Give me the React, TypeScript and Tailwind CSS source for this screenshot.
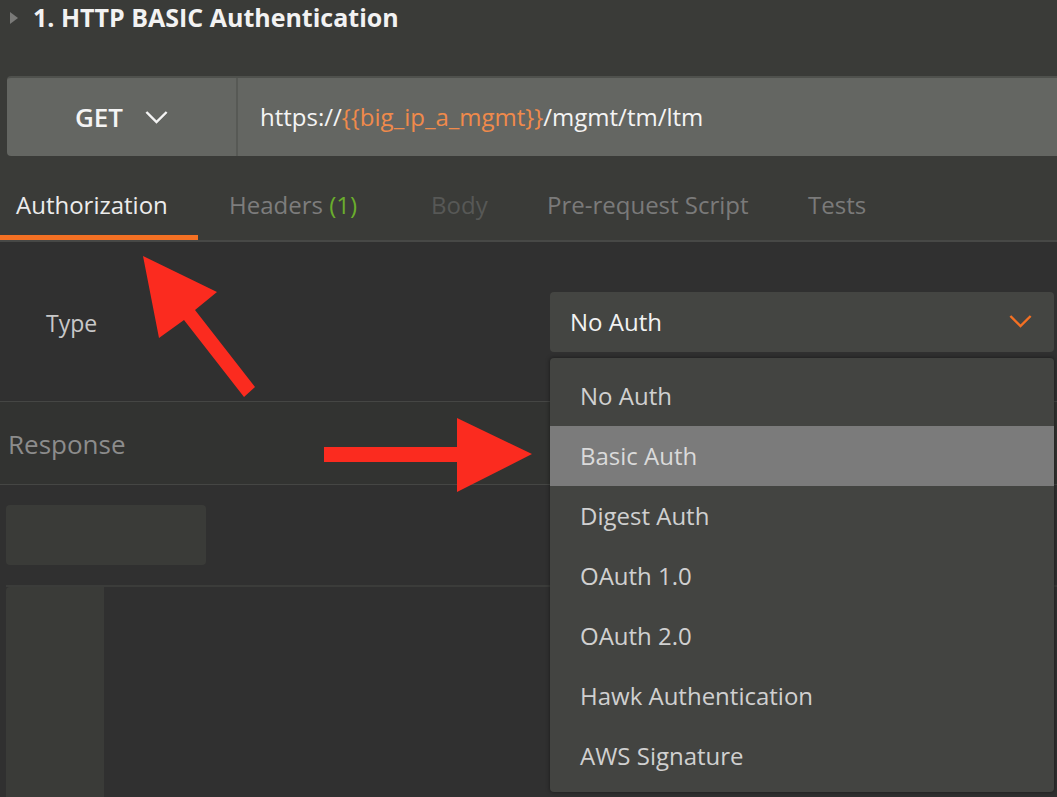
import React from "react";

const font = { fontFamily: '"Open Sans", "Noto Sans", sans-serif' };

const authTypes = [
  "No Auth",
  "Basic Auth",
  "Digest Auth",
  "OAuth 1.0",
  "OAuth 2.0",
  "Hawk Authentication",
  "AWS Signature",
];

const Chevron = ({ color, className }: { color: string; className?: string }) => (
  <svg viewBox="0 0 24 14" className={className} fill="none">
    <path d="M2 2 L12 12 L22 2" stroke={color} strokeWidth="2.6" strokeLinecap="square" />
  </svg>
);

const Tabs = () => (
  <div className="flex h-[86px] items-stretch border-b-2 border-[#474846] text-[24px]">
    <div className="relative flex w-[198px] items-center pl-[16px] pt-[14px] text-[#ececec]">
      Authorization
      <div className="absolute bottom-0 left-0 h-[5px] w-full bg-[#f47023]" />
    </div>
    <div className="flex w-[202px] items-center whitespace-pre pl-[31px] pt-[14px] text-[#7d7d7d]">
      Headers <span className="text-[#6aae2c]">(1)</span>
    </div>
    <div className="flex w-[116px] items-center pl-[31px] pt-[14px] text-[#575856]">
      Body
    </div>
    <div className="flex w-[261px] items-center pl-[31px] pt-[14px] text-[#7a7a7a]">
      Pre-request Script
    </div>
    <div className="flex items-center pl-[31px] pt-[14px] text-[#7a7a7a]">
      Tests
    </div>
  </div>
);

export default function App() {
  return (
    <div
      className="relative h-[797px] w-[1057px] overflow-hidden bg-[#303030]"
      style={font}
    >
      {/* request header */}
      <div className="bg-[#3a3b38]">
        <div className="flex h-[35px] items-center pl-[10px]">
          <svg viewBox="0 0 8 12" className="mr-[15px] h-[12px] w-[8px]">
            <path d="M0 0 L8 6 L0 12 Z" fill="#7a7a78" />
          </svg>
          <span className="text-[25px] font-bold text-[#f2f2f2]">
            1. HTTP BASIC Authentication
          </span>
        </div>
        <div className="h-[41px]" />
        <div className="ml-[7px] mr-[-12px] flex h-[80px] overflow-hidden rounded-[4px] border-t-2 border-[#4f514d] bg-[#646662]">
          <div className="flex w-[231px] items-center justify-center gap-[22px] border-r-2 border-[#575955]">
            <span className="text-[26px] font-semibold text-[#f4f4f4]">GET</span>
            <Chevron color="#f4f4f4" className="h-[13px] w-[23px]" />
          </div>
          <div className="flex items-center pl-[22px] text-[24px] text-[#f4f4f4]">
            https://
            <span className="text-[#f08a4b]">{"{{big_ip_a_mgmt}}"}</span>
            /mgmt/tm/ltm
          </div>
        </div>
        <Tabs />
      </div>

      {/* auth type row */}
      <div className="flex h-[160px] items-center border-b border-[#454644]">
        <div className="w-[550px] pt-[4px] pl-[46px] text-[23px] text-[#c8c8c8]">Type</div>
        <div className="flex h-[60px] w-[504px] items-center justify-between rounded-[4px] bg-[#444542] pl-[20px] pr-[22px]">
          <span className="text-[24px] text-[#f2f2f2]">No Auth</span>
          <Chevron color="#f47023" className="h-[13px] w-[23px]" />
        </div>
      </div>

      {/* response */}
      <div className="flex h-[83px] items-center border-b border-[#454644] bg-[#323331] pl-[8px] pt-[2px]">
        <span className="text-[26px] text-[#8c8c8c]">Response</span>
      </div>
      <div className="px-[6px] pt-[20px]">
        <div className="h-[60px] w-[200px] rounded-[4px] bg-[#3a3b38]" />
      </div>
      <div className="mt-[20px] ml-[6px] h-[250px] border-t-2 border-[#3b3c3a]">
        <div className="h-full w-[98px] rounded-tl-[4px] bg-[#3a3b38]" />
      </div>

      {/* dropdown menu */}
      <div className="absolute left-[550px] top-[358px] w-[504px] rounded-[4px] bg-[#434441] pb-[6px] pt-[8px] shadow-[0_0_4px_rgba(0,0,0,0.5)]">
        {authTypes.map((t) => (
          <div
            key={t}
            className={
              "flex h-[60px] items-center pl-[30px] text-[24px] " +
              (t === "Basic Auth" ? "bg-[#7b7b7b] text-[#dadada]" : "text-[#d0d0d0]")
            }
          >
            {t}
          </div>
        ))}
      </div>

      {/* annotation arrows */}
      <svg className="pointer-events-none absolute left-0 top-0" width="1057" height="797">
        <polygon
          points="143,256 217,292 195,310 255,387 244,397 184,320 159,338"
          fill="#fb2b1f"
        />
        <polygon points="324,447 457,447 457,418 532,454 457,492 457,462 324,462" fill="#fb2b1f" />
      </svg>
    </div>
  );
}
